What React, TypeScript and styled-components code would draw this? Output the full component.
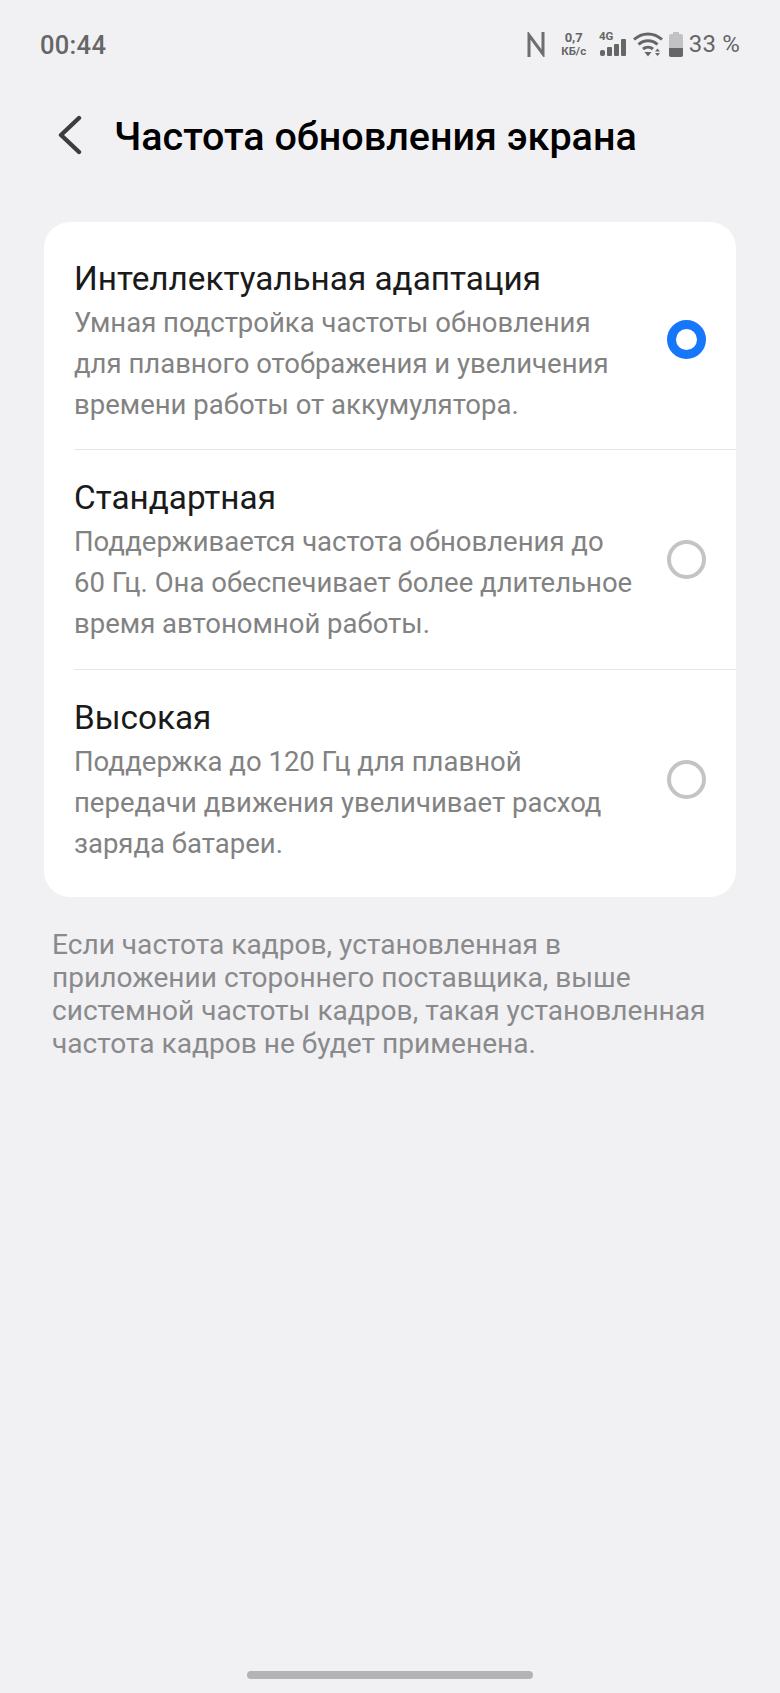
import React from "react";
import styled, { createGlobalStyle } from "styled-components";

const Global = createGlobalStyle`
  html, body { margin: 0; padding: 0; background: #f1f1f4; }
  * { box-sizing: border-box; }
`;

const Page = styled.div`
  width: 780px;
  height: 1693px;
  display: flex;
  flex-direction: column;
  background: #f1f1f4;
  font-family: Roboto, "Noto Sans", sans-serif;
  overflow: hidden;
`;

const StatusBar = styled.div`
  height: 88px;
  padding: 29px 40px 0 40px;
  display: flex;
  justify-content: space-between;
  align-items: flex-start;
  color: #666;
`;

const Time = styled.div`
  font-size: 25.5px;
  line-height: 32px;
  font-weight: 500;
  letter-spacing: 0.3px;
`;

const StatusIcons = styled.div`
  display: flex;
  align-items: center;
  height: 32px;
  margin-top: -1px;
`;

const NfcIcon = styled.svg`
  width: 18px;
  height: 25px;
  flex: none;
`;

const Speed = styled.div`
  margin-left: 16px;
  width: 26px;
  display: flex;
  flex-direction: column;
  align-items: center;
  font-weight: 700;
`;

const SpeedValue = styled.span`
  font-size: 13px;
  line-height: 14px;
`;

const SpeedUnit = styled.span`
  font-size: 11.5px;
  line-height: 13px;
  white-space: nowrap;
`;

const SignalIcon = styled.svg`
  margin-left: 11px;
  width: 30px;
  height: 28px;
  flex: none;
`;

const WifiIcon = styled.svg`
  margin-left: 5px;
  width: 30px;
  height: 26px;
  flex: none;
`;

const BatteryIcon = styled.svg`
  margin-left: 5px;
  width: 16px;
  height: 25px;
  flex: none;
`;

const Battery = styled.div`
  margin-left: 5px;
  font-size: 24px;
  line-height: 32px;
  letter-spacing: 0.2px;
`;

const Header = styled.div`
  height: 134px;
  padding: 0 0 0 56px;
  display: flex;
  align-items: flex-start;
  gap: 28px;
`;

const BackIcon = styled.svg`
  margin-top: 27px;
  width: 30px;
  height: 40px;
  flex: none;
`;

const Title = styled.h1`
  margin: 0;
  font-size: 39.5px;
  line-height: 52px;
  margin-top: 23px;
  font-weight: 500;
  color: #000;
  white-space: nowrap;
`;

const Card = styled.section`
  margin: 0 44px;
  background: #fff;
  border-radius: 26px;
  height: 675px;
  display: flex;
  flex-direction: column;
`;

const Row = styled.div<{ $h: number; $top: number; $divider: boolean }>`
  height: ${(p) => p.$h}px;
  margin-left: 30px;
  padding: ${(p) => p.$top}px 30px 0 0;
  display: flex;
  justify-content: space-between;
  align-items: flex-start;
  border-bottom: ${(p) => (p.$divider ? "1px solid #e6e6e8" : "none")};
`;

const RowText = styled.div`
  display: flex;
  flex-direction: column;
`;

const RowTitle = styled.div`
  font-size: 33.3px;
  line-height: 40px;
  color: #1a1a1a;
  white-space: nowrap;
`;

const RowDesc = styled.div`
  margin-top: 3px;
  font-size: 27.5px;
  line-height: 41px;
  color: #828282;
  white-space: pre-line;
`;

const Radio = styled.div<{ $top: number; $on: boolean }>`
  flex: none;
  width: 39px;
  height: 39px;
  margin-top: ${(p) => p.$top}px;
  border-radius: 50%;
  border: ${(p) => (p.$on ? "9px solid #1677fb" : "4.5px solid #c4c4c4")};
  background: #fff;
`;

const Note = styled.p`
  margin: 31px 44px 0 52px;
  font-size: 28.1px;
  line-height: 33px;
  color: #8a8a8c;
  white-space: pre-line;
`;

const Spacer = styled.div`
  flex: 1;
`;

const HomeBar = styled.div`
  align-self: center;
  width: 286px;
  height: 8px;
  margin-bottom: 14px;
  border-radius: 4px;
  background: #b3b3b5;
`;

const rows = [
  {
    title: "Интеллектуальная адаптация",
    desc: "Умная подстройка частоты обновления\nдля плавного отображения и увеличения\nвремени работы от аккумулятора.",
    on: true,
    h: 228,
    top: 37,
    radio: 61,
  },
  {
    title: "Стандартная",
    desc: "Поддерживается частота обновления до\n60 Гц. Она обеспечивает более длительное\nвремя автономной работы.",
    on: false,
    h: 220,
    top: 28,
    radio: 62,
  },
  {
    title: "Высокая",
    desc: "Поддержка до 120 Гц для плавной\nпередачи движения увеличивает расход\nзаряда батареи.",
    on: false,
    h: 227,
    top: 28,
    radio: 62,
  },
];

export default function App() {
  return (
    <Page>
      <Global />
      <StatusBar>
        <Time>00:44</Time>
        <StatusIcons>
          <NfcIcon viewBox="0 0 18 25" fill="none" stroke="#6e6e6e" strokeWidth="3">
            <path d="M2 25V3L16 22V0" />
          </NfcIcon>
          <Speed>
            <SpeedValue>0,7</SpeedValue>
            <SpeedUnit>КБ/с</SpeedUnit>
          </Speed>
          <SignalIcon viewBox="0 0 30 28">
            <text x="1" y="10" fontSize="11.5" fontWeight="700" fill="#666" fontFamily="Roboto">4G</text>
            <rect x="2" y="20" width="5" height="6" rx="2" fill="#666" />
            <rect x="9" y="17" width="5" height="9" rx="1" fill="#666" />
            <rect x="16" y="14" width="5" height="12" rx="1" fill="#666" />
            <rect x="23" y="9" width="5" height="17" rx="1" fill="#666" />
          </SignalIcon>
          <WifiIcon viewBox="0 0 30 26" fill="none" stroke="#666" strokeWidth="3">
            <path d="M1 8.5C9 1 21 1 29 8.5" />
            <path d="M5.5 13.5C11 8.5 19 8.5 24.5 13.5" />
            <path d="M10 18C13 15.5 17 15.5 20 18" />
            <path d="M11.5 21h7L15 25.5z" fill="#666" stroke="none" />
            <path d="M22 20.5h5l-2.5-3zM22 22h5l-2.5 3z" fill="#666" stroke="none" />
          </WifiIcon>
          <BatteryIcon viewBox="0 0 16 25">
            <path d="M5 0h6v2h2a2 2 0 0 1 2 2v19a2 2 0 0 1-2 2H3a2 2 0 0 1-2-2V4a2 2 0 0 1 2-2h2z" fill="#c2c2c4" />
            <path d="M1 16h14v7a2 2 0 0 1-2 2H3a2 2 0 0 1-2-2z" fill="#666" />
          </BatteryIcon>
          <Battery>33 %</Battery>
        </StatusIcons>
      </StatusBar>
      <Header>
        <BackIcon viewBox="0 0 30 40" fill="none" stroke="#3d3d3d" strokeWidth="4.4" strokeLinecap="round" strokeLinejoin="round">
          <path d="M23 3L5 20l18 17" />
        </BackIcon>
        <Title>Частота обновления экрана</Title>
      </Header>
      <Card>
        {rows.map((r, i) => (
          <Row key={r.title} $h={r.h} $top={r.top} $divider={i < rows.length - 1}>
            <RowText>
              <RowTitle>{r.title}</RowTitle>
              <RowDesc>{r.desc}</RowDesc>
            </RowText>
            <Radio $top={r.radio} $on={r.on} />
          </Row>
        ))}
      </Card>
      <Note>
        {"Если частота кадров, установленная в\nприложении стороннего поставщика, выше\nсистемной частоты кадров, такая установленная\nчастота кадров не будет применена."}
      </Note>
      <Spacer />
      <HomeBar />
    </Page>
  );
}
